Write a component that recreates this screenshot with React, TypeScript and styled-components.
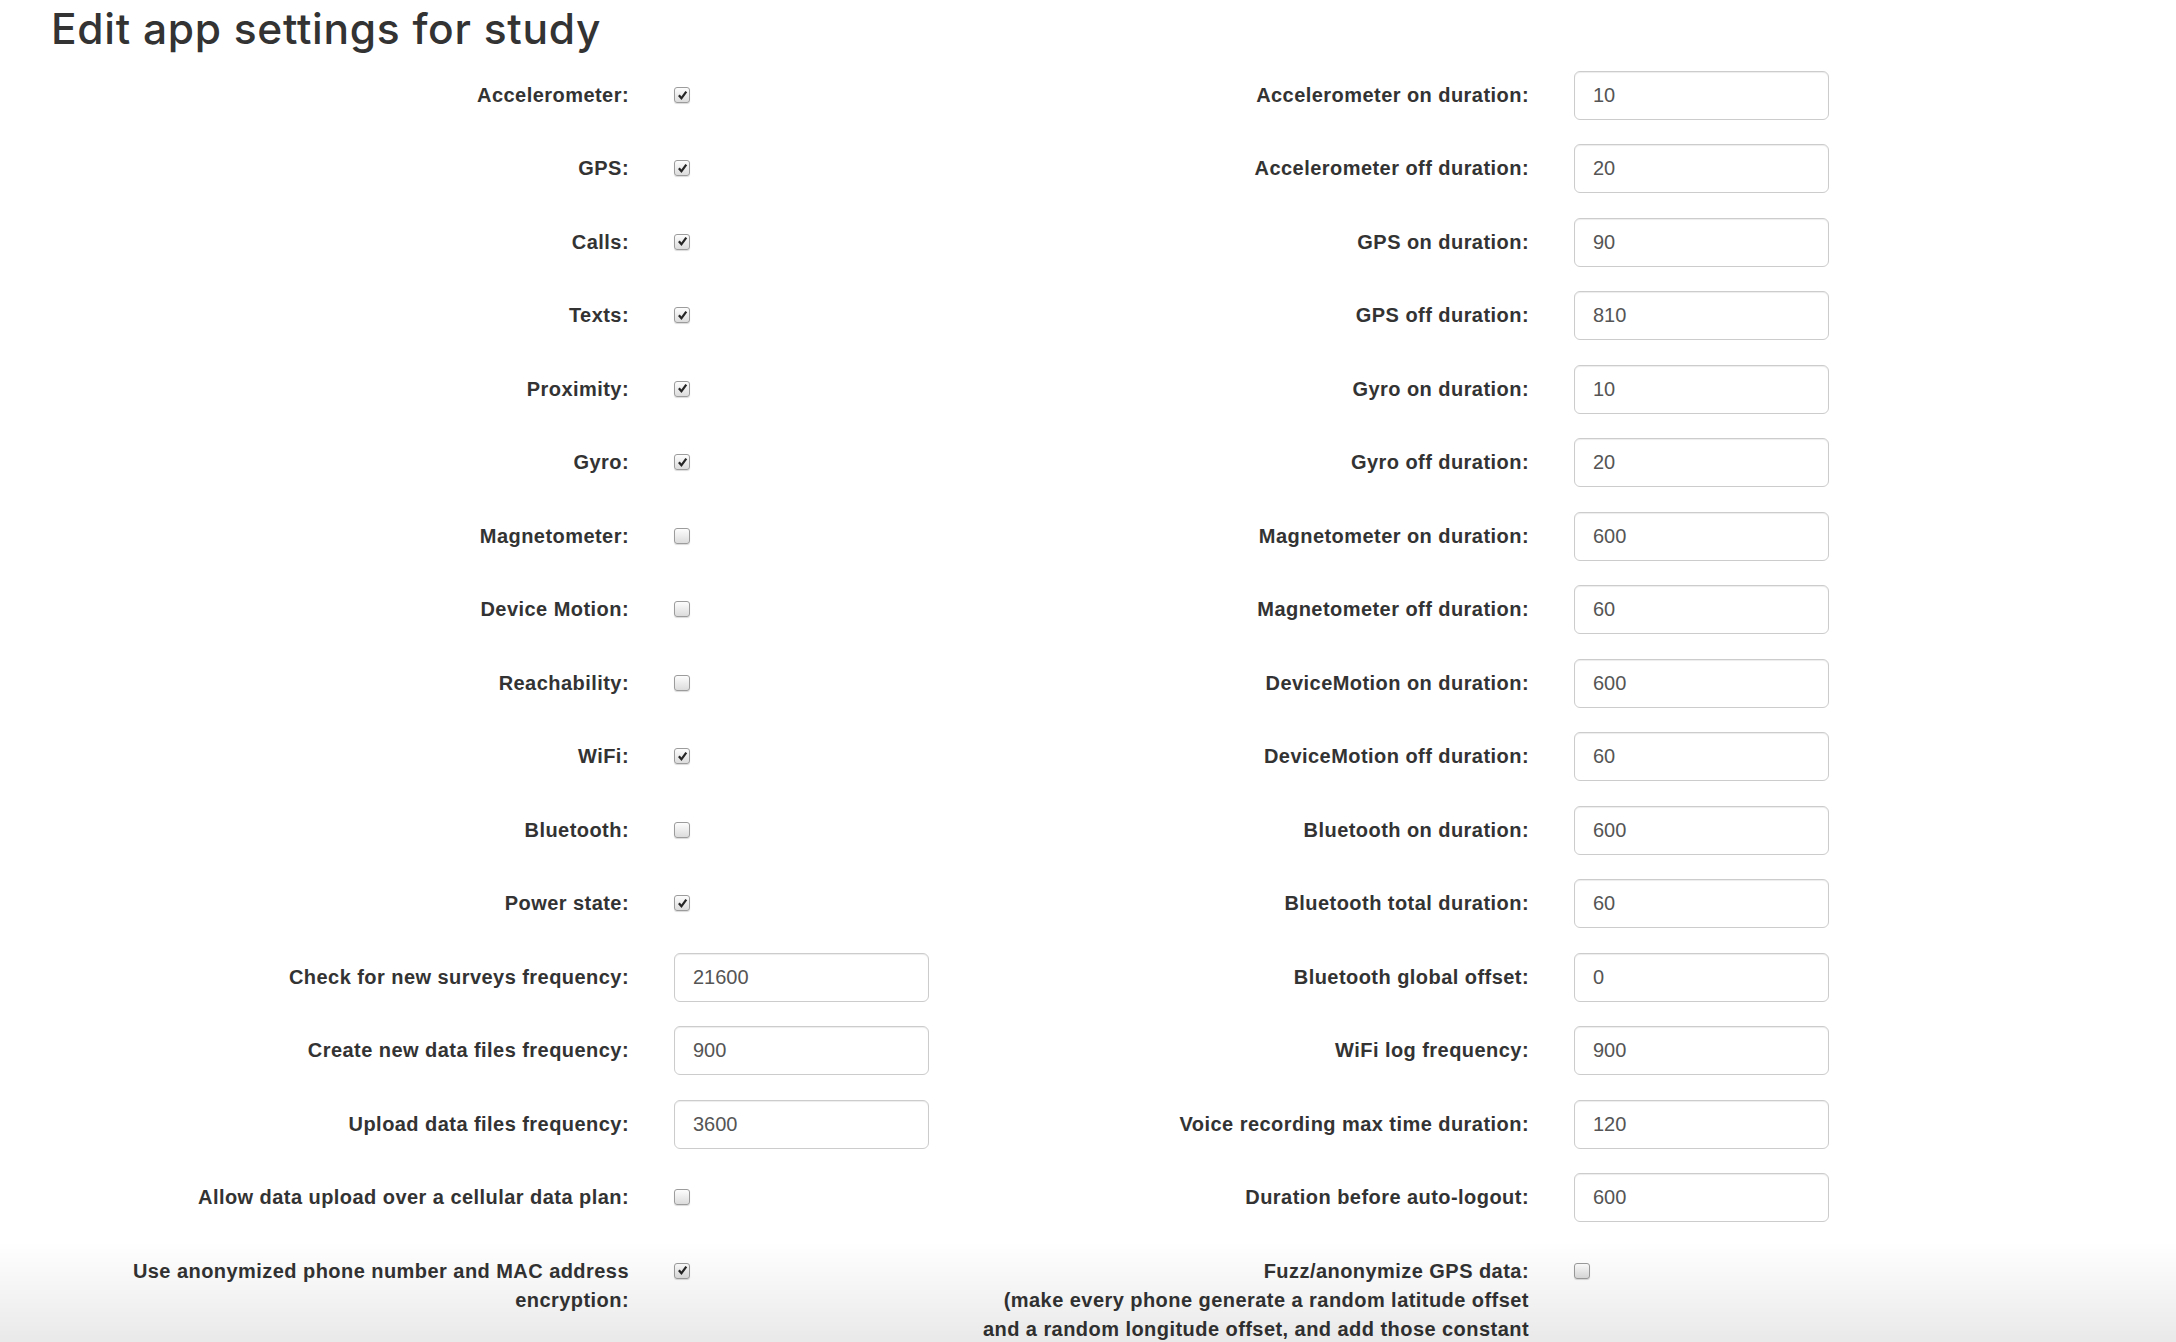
import React from "react";
import styled, { createGlobalStyle } from "styled-components";

const GlobalStyle = createGlobalStyle`
  html, body {
    margin: 0;
    padding: 0;
    background: #ffffff;
  }
  body {
    font-family: "Liberation Sans", Arial, Helvetica, sans-serif;
    color: #333333;
  }
`;

const Page = styled.main`
  min-height: 100vh;
`;

const Title = styled.h1`
  margin: 0;
  padding: 4px 0 0 51px;
  font-family: Inter, "Liberation Sans", Arial, sans-serif;
  font-size: 42.5px;
  line-height: 50px;
  font-weight: 500;
  letter-spacing: 0.7px;
  color: #333333;
`;

const FormGrid = styled.form`
  display: grid;
  grid-template-columns: 651px 300px 600px 300px;
  grid-auto-rows: minmax(49px, auto);
  row-gap: 24.47px;
  margin-top: 17px;
  padding-bottom: 60px;
`;

const Label = styled.label<{ $side: "left" | "right" }>`
  display: block;
  box-sizing: border-box;
  padding: 10px 22px 0 ${(p) => (p.$side === "left" ? "69px" : "20px")};
  text-align: right;
  font-size: 20px;
  line-height: 29px;
  font-weight: 700;
  letter-spacing: 0.45px;
  color: #333333;
`;

const Control = styled.div`
  padding-left: 23px;
  display: flex;
  align-items: flex-start;
`;

const TextInput = styled.input`
  box-sizing: border-box;
  width: 255px;
  height: 49px;
  padding: 0 18px;
  border: 1px solid #cccccc;
  border-radius: 6px;
  box-shadow: inset 0 1px 1px rgba(0, 0, 0, 0.075);
  background: #ffffff;
  font-family: "Liberation Sans", Arial, Helvetica, sans-serif;
  font-size: 20px;
  color: #555555;
  outline: none;
`;

const CheckBox = styled.span<{ $checked: boolean }>`
  display: inline-flex;
  align-items: center;
  justify-content: center;
  box-sizing: border-box;
  width: 16px;
  height: 16px;
  margin-top: 16px;
  border: 1px solid #9c9c9c;
  border-radius: 3px;
  background: linear-gradient(#fdfdfd, #dcdcdc);
  box-shadow: 0 1px 1px rgba(0, 0, 0, 0.15);
`;

const BottomFade = styled.div`
  position: fixed;
  left: 0;
  right: 0;
  bottom: 0;
  height: 100px;
  pointer-events: none;
  background: linear-gradient(rgba(0, 0, 0, 0), rgba(0, 0, 0, 0.085));
`;

type Field =
  | { label: React.ReactNode; kind: "check"; checked: boolean }
  | { label: React.ReactNode; kind: "input"; value: string };

const chk = (label: React.ReactNode, checked: boolean): Field => ({ label, kind: "check", checked });
const inp = (label: React.ReactNode, value: string): Field => ({ label, kind: "input", value });

const rows: [Field, Field][] = [
  [chk("Accelerometer:", true), inp("Accelerometer on duration:", "10")],
  [chk("GPS:", true), inp("Accelerometer off duration:", "20")],
  [chk("Calls:", true), inp("GPS on duration:", "90")],
  [chk("Texts:", true), inp("GPS off duration:", "810")],
  [chk("Proximity:", true), inp("Gyro on duration:", "10")],
  [chk("Gyro:", true), inp("Gyro off duration:", "20")],
  [chk("Magnetometer:", false), inp("Magnetometer on duration:", "600")],
  [chk("Device Motion:", false), inp("Magnetometer off duration:", "60")],
  [chk("Reachability:", false), inp("DeviceMotion on duration:", "600")],
  [chk("WiFi:", true), inp("DeviceMotion off duration:", "60")],
  [chk("Bluetooth:", false), inp("Bluetooth on duration:", "600")],
  [chk("Power state:", true), inp("Bluetooth total duration:", "60")],
  [inp("Check for new surveys frequency:", "21600"), inp("Bluetooth global offset:", "0")],
  [inp("Create new data files frequency:", "900"), inp("WiFi log frequency:", "900")],
  [inp("Upload data files frequency:", "3600"), inp("Voice recording max time duration:", "120")],
  [chk("Allow data upload over a cellular data plan:", false), inp("Duration before auto-logout:", "600")],
  [
    chk("Use anonymized phone number and MAC address encryption:", true),
    chk(
      <>
        Fuzz/anonymize GPS data:
        <br />
        (make every phone generate a random latitude offset
        <br />
        and a random longitude offset, and add those constant
        <br />
        offsets to every GPS coordinate it records)
      </>,
      false
    ),
  ],
];

const CheckMark = () => (
  <svg width="11" height="11" viewBox="0 0 11 11" aria-hidden="true">
    <path d="M1 6 L2.8 4.4 L4.4 6.4 L8.4 1 L10.2 2.3 L4.5 10 Z" fill="#262626" />
  </svg>
);

const FieldCells = ({ field, side }: { field: Field; side: "left" | "right" }) => (
  <>
    <Label $side={side}>{field.label}</Label>
    <Control>
      {field.kind === "check" ? (
        <CheckBox $checked={field.checked} role="checkbox" aria-checked={field.checked}>
          {field.checked && <CheckMark />}
        </CheckBox>
      ) : (
        <TextInput type="text" defaultValue={field.value} />
      )}
    </Control>
  </>
);

export default function App() {
  return (
    <Page>
      <GlobalStyle />
      <Title>Edit app settings for study</Title>
      <FormGrid onSubmit={(e) => e.preventDefault()}>
        {rows.map(([left, right], i) => (
          <React.Fragment key={i}>
            <FieldCells field={left} side="left" />
            <FieldCells field={right} side="right" />
          </React.Fragment>
        ))}
      </FormGrid>
      <BottomFade />
    </Page>
  );
}
